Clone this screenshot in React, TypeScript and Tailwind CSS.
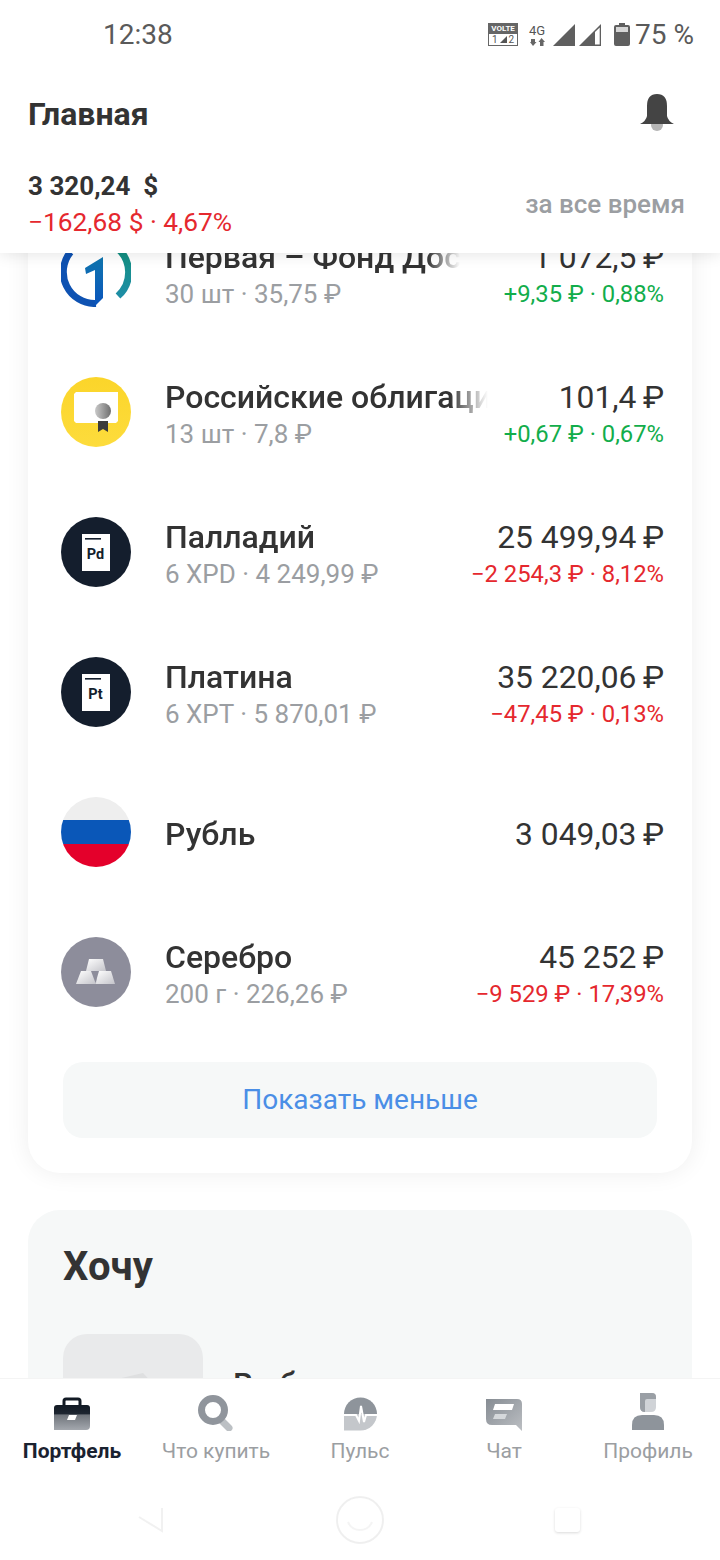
import type { ReactNode } from 'react';

const font = { fontFamily: 'Roboto, "Noto Sans", sans-serif' };

function GroupLogo() {
  return (
    <svg width="70" height="70" viewBox="0 0 70 70">
      <defs>
        <linearGradient id="one" x1="0" y1="0" x2="0" y2="1">
          <stop offset="0" stopColor="#1076ae" />
          <stop offset="1" stopColor="#0a54bd" />
        </linearGradient>
        <linearGradient id="ring" x1="0" y1="0" x2="0" y2="1">
          <stop offset="0" stopColor="#128f7c" />
          <stop offset="1" stopColor="#1e8ea6" />
        </linearGradient>
      </defs>
      <path d="M9.5 15 A31.5 31.5 0 0 0 35 66.5" fill="none" stroke="#0e52b2" strokeWidth="7" />
      <path d="M56 11 A31.5 31.5 0 0 1 57 59" fill="none" stroke="url(#ring)" strokeWidth="7" />
      <path d="M42 20 V61 L34 69 V33 L25 37 L24 31 Z" fill="url(#one)" />
    </svg>
  );
}

function BondIcon() {
  return (
    <svg width="70" height="70" viewBox="0 0 70 70">
      <defs>
        <linearGradient id="seal" x1="0" y1="0" x2="1" y2="0">
          <stop offset="0" stopColor="#c9c9c9" />
          <stop offset="1" stopColor="#6f6f6f" />
        </linearGradient>
        <linearGradient id="coin" x1="0" y1="0" x2="0" y2="1">
          <stop offset="0" stopColor="#fbd52a" />
          <stop offset="1" stopColor="#fddc3c" />
        </linearGradient>
      </defs>
      <circle cx="35" cy="35" r="35" fill="url(#coin)" />
      <path d="M15 15 H57 V44 L55 46 H15 L13 44 V17 Z" fill="#fff" />
      <path d="M37 44 H47 V55 L42 52 L37 55 Z" fill="#3c3c3c" />
      <circle cx="42" cy="34" r="8" fill="url(#seal)" />
    </svg>
  );
}

function MetalIcon({ symbol }: { symbol: string }) {
  return (
    <svg width="70" height="70" viewBox="0 0 70 70">
      <circle cx="35" cy="35" r="35" fill="#141e2d" />
      <rect x="21" y="17" width="28" height="37" fill="#fff" />
      <rect x="24" y="21" width="16" height="1.6" fill="#141e2d" />
      <text x="34.5" y="41.5" textAnchor="middle" fontFamily="Roboto" fontWeight="700" fontSize="14.5" fill="#141e2d">
        {symbol}
      </text>
    </svg>
  );
}

function FlagIcon() {
  return (
    <div className="w-[70px] h-[70px] rounded-full overflow-hidden flex flex-col">
      <div className="h-[23px] bg-[#eeeeee]" />
      <div className="h-[24px] bg-[#0a57b8]" />
      <div className="h-[23px] bg-[#e4002b]" />
    </div>
  );
}

function SilverIcon() {
  return (
    <svg width="70" height="70" viewBox="0 0 70 70">
      <defs>
        <linearGradient id="bar" x1="0" y1="0" x2="1" y2="1">
          <stop offset="0" stopColor="#ffffff" />
          <stop offset="1" stopColor="#c4c4ca" />
        </linearGradient>
      </defs>
      <circle cx="35" cy="35" r="35" fill="#8d8d9b" />
      <path d="M28 22 H42 L45 34 H25 Z" fill="url(#bar)" />
      <path d="M20 34 H34 L35 47 H15 Z" fill="url(#bar)" />
      <path d="M36 34 H50 L54 47 H35 Z" fill="url(#bar)" />
      <path d="M30 34 H38 L34.5 46 Z" fill="#8d8d9b" />
    </svg>
  );
}

function StatusIcons() {
  return (
    <div className="flex items-center">
      <div className="w-[30px] h-[23px] border border-[#666] flex flex-col">
        <div className="h-[10px] bg-[#666] text-white text-[8px] leading-[10px] font-bold text-center">VOLTE</div>
        <div className="flex-1 flex items-center justify-center text-[#555] text-[10px] leading-none gap-[2px]">
          <span>1</span>
          <svg width="7" height="7" viewBox="0 0 7 7">
            <path d="M0 7 L7 0 V7 Z" fill="#555" />
          </svg>
          <span>2</span>
        </div>
      </div>
      <div className="ml-[11px] w-[16px] flex flex-col items-center text-[#555]">
        <span className="text-[13px] leading-[14px]">4G</span>
        <svg width="15" height="8" viewBox="0 0 15 8">
          <path d="M1 1 H5 V4 H6.5 L3 8 L0 4 H1 Z M10 8 V4 H8.5 L11.5 0 L15 4 H13.5 V8 Z" fill="#666" />
        </svg>
      </div>
      <svg className="ml-[8px]" width="22" height="22" viewBox="0 0 22 22">
        <path d="M0 22 L22 0 V22 Z" fill="#5f5f5f" />
      </svg>
      <svg className="ml-[4px]" width="23" height="22" viewBox="0 0 23 22">
        <path d="M0 22 L22 0 V22 Z M16 8 V20.5 H20.7 V3.5 Z" fill="#5f5f5f" fillRule="evenodd" />
      </svg>
      <svg className="ml-[12px]" width="16" height="23" viewBox="0 0 16 23">
        <path d="M5 0 H11 V2 H14 Q16 2 16 4 V21 Q16 23 14 23 H2 Q0 23 0 21 V4 Q0 2 2 2 H5 Z" fill="#5f5f5f" />
        <rect x="2" y="4" width="12" height="5" fill="#d6d6d6" />
      </svg>
    </div>
  );
}

function Briefcase() {
  return (
    <svg width="36" height="34" viewBox="0 0 36 34">
      <defs>
        <linearGradient id="case" x1="0" y1="0" x2="0" y2="1">
          <stop offset="0" stopColor="#121a24" />
          <stop offset="0.35" stopColor="#1d2530" />
          <stop offset="0.4" stopColor="#6f747b" />
          <stop offset="1" stopColor="#a4a8ae" />
        </linearGradient>
      </defs>
      <path d="M10 8 V4 Q10 2 12 2 H24 Q26 2 26 4 V8" fill="none" stroke="#121a24" strokeWidth="3" />
      <path d="M3 8 H33 Q36 8 36 11 V29 Q36 33 32 33 H0 V11 Q0 8 3 8 Z" fill="url(#case)" />
      <path d="M15 18 H23 L21 23 H13 Z" fill="#fff" />
    </svg>
  );
}

function SearchIcon() {
  return (
    <svg width="36" height="36" viewBox="0 0 36 36">
      <path d="M23 25 L31 33" stroke="#bcc0c4" strokeWidth="7" strokeLinecap="round" />
      <circle cx="15" cy="15" r="11.5" fill="none" stroke="#90959c" strokeWidth="7" />
    </svg>
  );
}

function PulseIcon() {
  return (
    <svg width="34" height="34" viewBox="0 0 34 34">
      <path d="M1 17 A16.5 16.5 0 0 1 34 17 Z" fill="#8e949b" />
      <path d="M1 17 H34 A16.5 16.5 0 0 1 17.5 33.5 H1 Z" fill="#c4c7cb" />
      <path d="M0 18 H13 L16 24 L18 9 L21 25 L23 18 H34" fill="none" stroke="#fff" strokeWidth="2" />
    </svg>
  );
}

function ChatIcon() {
  return (
    <svg width="36" height="32" viewBox="0 0 36 32">
      <defs>
        <linearGradient id="chat" x1="0" y1="0" x2="1" y2="1">
          <stop offset="0" stopColor="#868c93" />
          <stop offset="1" stopColor="#bcbfc3" />
        </linearGradient>
      </defs>
      <path d="M0 0 H31 Q36 0 36 5 V32 L30 26 H6 Q0 26 0 20 Z" fill="url(#chat)" />
      <path d="M9 5 H28 L26 11 H7 Z" fill="#fff" />
      <path d="M9 15 H21 L19 20 H7 Z" fill="#d5d8db" />
    </svg>
  );
}

function ProfileIcon() {
  return (
    <svg width="32" height="38" viewBox="0 0 32 38">
      <path d="M8 0 H20 Q24 0 24 4 V14 Q24 19 19 19 H13 Q8 19 8 14 Z" fill="#d0d3d7" />
      <path d="M8 0 H20 Q24 0 24 4 V6 H15 Q13 6 13 8 V19 Q8 19 8 14 Z" fill="#9a9fa5" />
      <path d="M0 37 V32 Q0 22 10 22 H22 Q32 22 32 32 V37 Z" fill="#8e949b" />
    </svg>
  );
}

type Asset = {
  icon: ReactNode;
  name: string;
  nameClass?: string;
  qty?: string;
  value: string;
  change?: string;
  up?: boolean;
};

const assets: Asset[] = [
  {
    icon: <GroupLogo />,
    name: 'Первая – Фонд Доступа',
    nameClass: 'w-[295px] [mask-image:linear-gradient(to_right,black_262px,transparent_295px)]',
    qty: '30 шт · 35,75 ₽',
    value: '1 072,5 ₽',
    change: '+9,35 ₽ · 0,88%',
    up: true,
  },
  { icon: <BondIcon />, name: 'Российские облигации', qty: '13 шт · 7,8 ₽', value: '101,4 ₽', change: '+0,67 ₽ · 0,67%', up: true },
  { icon: <MetalIcon symbol="Pd" />, name: 'Палладий', qty: '6 XPD · 4 249,99 ₽', value: '25 499,94 ₽', change: '−2 254,3 ₽ · 8,12%' },
  { icon: <MetalIcon symbol="Pt" />, name: 'Платина', qty: '6 XPT · 5 870,01 ₽', value: '35 220,06 ₽', change: '−47,45 ₽ · 0,13%' },
  { icon: <FlagIcon />, name: 'Рубль', value: '3 049,03 ₽' },
  { icon: <SilverIcon />, name: 'Серебро', qty: '200 г · 226,26 ₽', value: '45 252 ₽', change: '−9 529 ₽ · 17,39%' },
];

const tabs = [
  { label: 'Портфель', icon: <Briefcase />, active: true },
  { label: 'Что купить', icon: <SearchIcon /> },
  { label: 'Пульс', icon: <PulseIcon /> },
  { label: 'Чат', icon: <ChatIcon /> },
  { label: 'Профиль', icon: <ProfileIcon /> },
];

function AssetRow({ a }: { a: Asset }) {
  return (
    <div className="h-[140px] flex items-center">
      <div className="w-[70px] h-[70px] shrink-0">{a.icon}</div>
      <div className={`ml-[34px] min-w-0 ${a.qty ? 'pt-[7px]' : 'pt-[4px]'}`}>
        <div
          className={`text-[32px] leading-[37px] font-medium text-[#333333] overflow-hidden whitespace-nowrap ${
            a.nameClass ?? 'w-[323px] [mask-image:linear-gradient(to_right,black_285px,transparent_323px)]'
          }`}
        >
          {a.name}
        </div>
        {a.qty && <div className="text-[26px] leading-[37px] text-[#9b9ea2] whitespace-nowrap">{a.qty}</div>}
      </div>
      <div className={`ml-auto shrink-0 flex flex-col items-end whitespace-nowrap ${a.qty ? 'pt-[7px]' : 'pt-[4px]'}`}>
        <div className="text-[31.8px] leading-[37px] text-[#333333]">{a.value.replace(' ₽', '\u2009₽')}</div>
        {a.change && (
          <div className={`text-[23.8px] leading-[37px] ${a.up ? 'text-[#12ad4b]' : 'text-[#e5282e]'}`}>{a.change}</div>
        )}
      </div>
    </div>
  );
}

export default function App() {
  return (
    <div className="h-[1560px] w-[720px] overflow-hidden flex flex-col bg-white" style={font}>
      <header className="relative z-10 h-[253px] shrink-0 bg-white shadow-[0_2px_14px_rgba(0,0,0,0.1)]">
        <div className="h-[68px] pl-[103px] pr-[26px] flex items-center justify-between">
          <span className="text-[28px] pt-[1px] text-[#5a5a5a]">12:38</span>
          <div className="flex items-center pt-[1px]">
            <StatusIcons />
            <span className="ml-[5px] text-[28px] text-[#5a5a5a]">75 %</span>
          </div>
        </div>
        <div className="h-[92px] pl-[28px] pr-[46px] flex items-center justify-between">
          <span className="text-[32px] -mt-[1px] font-bold text-[#333333]">Главная</span>
          <svg className="-mt-[2px]" width="34" height="38" viewBox="0 0 34 38">
            <circle cx="17" cy="31" r="6" fill="#b5b5b5" />
            <path d="M17 0 Q27 0 27 12 V22 Q28 27 34 30 H0 Q6 27 7 22 V12 Q7 0 17 0 Z" fill="#444444" />
          </svg>
        </div>
        <div className="pt-[8px] pl-[28px] pr-[35px] flex items-center justify-between">
          <div>
            <div className="text-[26px] leading-[36px] font-bold text-[#333333] whitespace-pre">3 320,24  $</div>
            <div className="text-[26.3px] leading-[36px] text-[#e5282e]">−162,68 $ · 4,67%</div>
          </div>
          <span className="text-[26px] font-medium text-[#9b9ea2]">за все время</span>
        </div>
      </header>

      <main className="flex-1 min-h-0 overflow-hidden px-[28px]">
        <section className="-mt-[51px] bg-white rounded-[32px] pl-[33px] pr-[28px] pb-[35px] shadow-[0_0_24px_rgba(0,0,0,0.07)]">
          {assets.map((a) => (
            <AssetRow key={a.name} a={a} />
          ))}
          <button className="mt-[20px] ml-[2px] w-[594px] h-[76px] rounded-[20px] bg-[#f6f8f8] text-[28px] text-[#4a8ee6]">
            Показать меньше
          </button>
        </section>
        <section className="mt-[37px] h-[400px] bg-[#f6f8f8] rounded-[32px] px-[35px] pt-[32px]">
          <h2 className="text-[40px] leading-[50px] font-bold text-[#333333]">Хочу</h2>
          <div className="mt-[42px] flex">
            <div className="w-[140px] h-[140px] rounded-[24px] bg-[#e9eaeb] overflow-hidden">
              <svg width="140" height="140" viewBox="0 0 140 140">
                <path d="M50 46 L80 39 L100 60 L60 90 Z" fill="#dedfe0" />
              </svg>
            </div>
            <span className="ml-[30px] mt-[32px] text-[32px] leading-[37px] font-medium text-[#333333]">Выбрать</span>
          </div>
        </section>
      </main>

      <nav className="relative z-10 h-[182px] shrink-0 bg-white border-t border-[#f4f4f4]">
        <div className="grid grid-cols-5">
          {tabs.map((t) => (
            <div key={t.label} className="flex flex-col items-center">
              <div className="h-[52px] flex items-end">{t.icon}</div>
              <span
                className={`mt-[8px] text-[21px] leading-[24px] whitespace-nowrap ${
                  t.active ? 'font-bold text-[#1a2230]' : 'text-[#9b9ea2]'
                }`}
              >
                {t.label}
              </span>
            </div>
          ))}
        </div>
        <div className="mt-[32px] pl-[138px] pr-[140px] flex items-center justify-between opacity-60">
          <svg width="26" height="26" viewBox="0 0 26 26">
            <path d="M1 10 L24 24 V1" fill="none" stroke="#e8e8e8" strokeWidth="2" />
          </svg>
          <svg width="50" height="50" viewBox="0 0 50 50">
            <circle cx="25" cy="25" r="23" fill="none" stroke="#e6e6e6" strokeWidth="2" />
            <path d="M13 27 A13 13 0 0 0 37 27" fill="none" stroke="#eeeeee" strokeWidth="2" />
          </svg>
          <div className="w-[25px] h-[24px] rounded-[3px] shadow-[0_1px_3px_rgba(0,0,0,0.25)]" />
        </div>
      </nav>
    </div>
  );
}
